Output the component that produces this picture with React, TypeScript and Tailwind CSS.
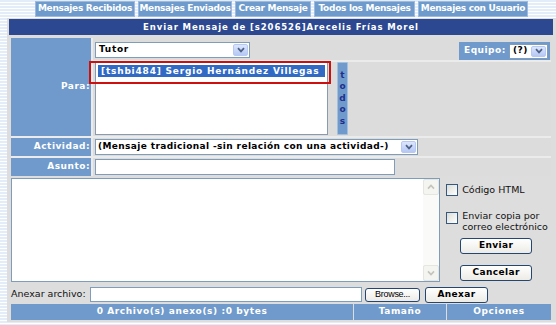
import React from 'react';

const tabs = [
    { label: 'Mensajes Recibidos', w: 'w-[100px]' },
    { label: 'Mensajes Enviados', w: 'w-[94px]' },
    { label: 'Crear Mensaje', w: 'w-[76px]' },
    { label: 'Todos los Mensajes', w: 'w-[101px]' },
    { label: 'Mensajes con Usuario', w: 'w-[110px]' },
];

const DropArrow = () => (
    <span className="flex h-full w-[15px] shrink-0 items-center justify-center rounded-[2px] border border-[#b7c9f2] bg-[linear-gradient(#dce6fd,#b5c8f4)]">
        <svg width="8" height="6" viewBox="0 0 8 6">
            <path d="M1 1.2 L4 4.4 L7 1.2" stroke="#4d6185" strokeWidth="1.7" fill="none" />
        </svg>
    </span>
);

const XpButton = ({ children, className }: { children: React.ReactNode; className: string }) => (
    <button className={`flex items-center justify-center rounded-[3px] border border-[#24466f] bg-[linear-gradient(#ffffff,#ecebe6)] text-[9px] font-bold tracking-[0.4px] text-black ${className}`}>
        {children}
    </button>
);

const Checkbox = () => (
    <span className="block h-[12px] w-[12px] shrink-0 border border-[#36587e] bg-[linear-gradient(135deg,#dcdcd6,#ffffff)]" />
);

const App = () => {
    return (
        <div className="relative h-[325px] w-[556px] overflow-hidden bg-[repeating-linear-gradient(#e3ecf9_0px,#e3ecf9_2px,#ffffff_2px,#ffffff_3px)] font-['DejaVu_Sans',Verdana,sans-serif] text-black">
            {/* pestañas */}
            <div className="flex h-[18px] gap-[3px] pl-[35px] pt-[1px]">
                {tabs.map((t) => (
                    <div
                        key={t.label}
                        className={`flex h-[16px] items-center justify-center border border-[#9dbbe0] bg-[#6e9bcb] text-[9px] font-bold tracking-[-0.3px] text-white ${t.w}`}
                    >
                        {t.label}
                    </div>
                ))}
            </div>

            <div className="ml-[7px] h-[304px] w-[549px] bg-[#dddddd] pl-[2px] pr-[3px] pt-[1px]">
                <div className="flex h-[16px] items-center justify-center bg-[#2c4891] text-[8.5px] font-bold tracking-[0.9px] text-white">
                    Enviar Mensaje de [s206526]Arecelis Frías Morel
                </div>

                <div className="mt-[3px] grid grid-cols-[80px_1fr] gap-[2px] bg-[#ebebeb] mx-[2px]">
                    <div className="row-span-2 flex items-center justify-end bg-[#6f9acb] pr-[1px] text-[9px] font-bold tracking-[0.5px] text-white">
                        Para:
                    </div>
                    <div className="flex h-[22px] items-start justify-between bg-[#dcdcdc] pl-[2px] pr-[1px] pt-[4px]">
                        <div className="flex h-[16px] w-[155px] items-center border border-[#7f9db9] bg-white py-[1px] pl-[3px] pr-[1px]">
                            <span className="flex-1 text-[9px] font-bold tracking-[0.7px]">Tutor</span>
                            <DropArrow />
                        </div>
                        <div className="flex h-[18px] w-[91px] items-center bg-[#6f9acb] pl-[5px] pr-[2px]">
                            <span className="flex-1 text-[9px] font-bold tracking-[0.5px] text-white">Equipo:</span>
                            <div className="flex h-[15px] w-[39px] items-center border border-[#7f9db9] bg-white py-[1px] pl-[3px] pr-[1px]">
                                <span className="flex-1 text-[9px] font-bold tracking-[0.5px]">(?)</span>
                                <DropArrow />
                            </div>
                        </div>
                    </div>
                    <div className="flex h-[74px] items-start bg-[#dcdcdc] pl-[2px]">
                        <div className="h-[73px] w-[233px] border border-[#8a9bb0] bg-white p-[2px]">
                            <div className="h-[12px] bg-[#316ac5] pl-[3px] text-[9px] font-bold leading-[12px] tracking-[0.8px] text-white">
                                [tshbi484] Sergio Hernández Villegas
                            </div>
                        </div>
                        <div className="ml-[9px] flex h-[73px] w-[11px] flex-col items-center justify-center rounded-[1px] border border-[#a3bfe0] bg-[#6f9acb] text-[9px] font-bold leading-[11.5px] text-[#1f2f8c]">
                            <span>t</span>
                            <span>o</span>
                            <span>d</span>
                            <span>o</span>
                            <span>s</span>
                        </div>
                    </div>

                    <div className="flex h-[18px] items-center justify-end bg-[#6f9acb] pr-[1px] text-[9px] font-bold tracking-[0.5px] text-white">
                        Actividad:
                    </div>
                    <div className="flex h-[18px] items-center bg-[#dcdcdc] pl-[2px]">
                        <div className="flex h-[16px] w-[323px] items-center border border-[#7f9db9] bg-white py-[1px] pl-[2px] pr-[1px]">
                            <span className="flex-1 overflow-hidden whitespace-nowrap text-[9px] font-bold tracking-[0.38px]">
                                (Mensaje tradicional -sin relación con una actividad-)
                            </span>
                            <DropArrow />
                        </div>
                    </div>

                    <div className="flex h-[18px] items-center justify-end bg-[#6f9acb] pr-[1px] text-[9px] font-bold tracking-[0.5px] text-white">
                        Asunto:
                    </div>
                    <div className="flex h-[18px] items-center bg-[#dcdcdc] pl-[2px]">
                        <div className="h-[16px] w-[300px] border border-[#7f9db9] bg-white" />
                    </div>
                </div>

                <div className="mt-[2px] flex px-[2px]">
                    <div className="flex h-[104px] w-[430px] justify-end border border-[#7f9db9] bg-white">
                        <div className="flex w-[16px] flex-col justify-between bg-[#fafaf8]">
                            <div className="flex h-[16px] items-center justify-center rounded-[2px] border border-[#e6e6e0] bg-[#f4f4f0]">
                                <svg width="8" height="6" viewBox="0 0 8 6">
                                    <path d="M1 4.6 L4 1.4 L7 4.6" stroke="#c4c4bc" strokeWidth="1.6" fill="none" />
                                </svg>
                            </div>
                            <div className="flex h-[16px] items-center justify-center rounded-[2px] border border-[#e6e6e0] bg-[#f4f4f0]">
                                <svg width="8" height="6" viewBox="0 0 8 6">
                                    <path d="M1 1.4 L4 4.6 L7 1.4" stroke="#c4c4bc" strokeWidth="1.6" fill="none" />
                                </svg>
                            </div>
                        </div>
                    </div>
                    <div className="ml-[6px] flex w-[105px] flex-col">
                        <label className="mt-[6px] flex h-[12px] items-center gap-[4px] text-[9.5px] text-[#111]">
                            <Checkbox />
                            Código HTML
                        </label>
                        <label className="mt-[14px] flex items-start gap-[4px] text-[9.5px] leading-[11px] text-[#111]">
                            <span className="mt-[2px]">
                                <Checkbox />
                            </span>
                            <span>
                                Enviar copia por
                                <br />
                                correo electrónico
                            </span>
                        </label>
                        <XpButton className="ml-[14px] mt-[6px] h-[16px] w-[72px]">Enviar</XpButton>
                        <XpButton className="ml-[14px] mt-[11px] h-[16px] w-[72px]">Cancelar</XpButton>
                    </div>
                </div>

                <div className="mt-[4px] flex h-[17px] items-center px-[2px]">
                    <span className="w-[79px] text-[9.5px] text-[#111]">Anexar archivo:</span>
                    <div className="h-[15px] w-[272px] border border-[#7f9db9] bg-white" />
                    <button className="ml-[3px] flex h-[14px] w-[55px] items-center justify-center rounded-[3px] border border-[#24466f] bg-[linear-gradient(#ffffff,#ecebe6)] font-['Liberation_Sans',Arial,sans-serif] text-[9px] tracking-[-0.3px] text-black">
                        Browse...
                    </button>
                    <XpButton className="ml-[5px] h-[16px] w-[63px]">Anexar</XpButton>
                </div>

                <div className="mt-[1px] grid h-[16px] grid-cols-[342px_92px_104px] gap-[1px] px-[2px] text-[9px] font-bold tracking-[0.6px] text-white">
                    <div className="flex items-center justify-center bg-[#6f9acb]">0 Archivo(s) anexo(s) :0 bytes</div>
                    <div className="flex items-center justify-center bg-[#6f9acb]">Tamaño</div>
                    <div className="flex items-center justify-center bg-[#6f9acb]">Opciones</div>
                </div>
            </div>

            {/* marca roja sobre el destinatario */}
            <div className="absolute left-[89px] top-[61px] h-[23px] w-[242px] border-2 border-[#cc1010]" />
        </div>
    );
};

export default App;
